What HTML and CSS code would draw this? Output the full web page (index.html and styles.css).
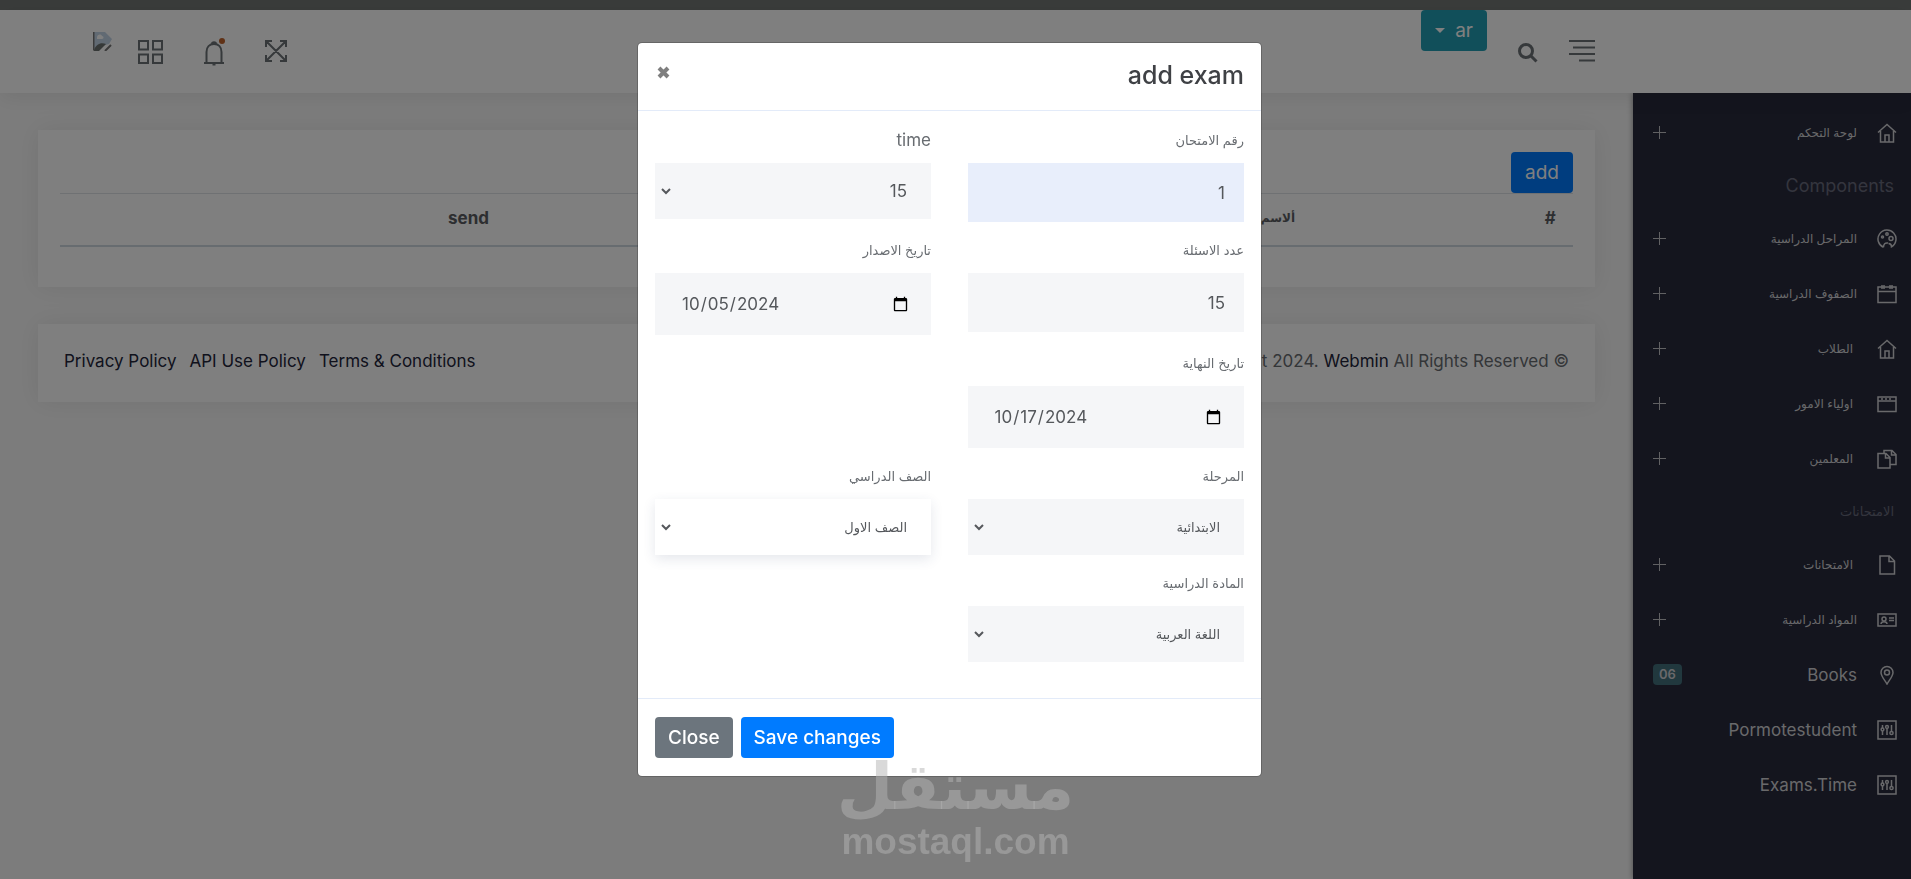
FILE: index.html
```html
<!DOCTYPE html>
<html lang="ar" dir="rtl">
<head>
  <meta charset="UTF-8">
  <meta name="viewport" content="width=device-width, initial-scale=1.0">
  <title>Webmin - Exams</title>
  <link rel="stylesheet" href="styles.css">
</head>
<body>
  <!-- Icons -->
  <svg class="sprite" aria-hidden="true">
    <symbol id="i-home" viewBox="0 0 20 20"><path d="M1 9.500 10 1.500l9 8M3.500 8v11h13V8M8 19v-7h4v7"/></symbol>
    <symbol id="i-palette" viewBox="0 0 20 20"><path d="M6.500 18.300A9 9 0 1 1 14.500 17.800C14.500 16 13.500 14.500 11.500 14.500M6.500 18.300C6.500 15 8 13.500 11 14"/><circle cx="5.500" cy="8" r="1"/><circle cx="10" cy="5" r="1.200"/><circle cx="14" cy="9.500" r="2"/></symbol>
    <symbol id="i-calendar" viewBox="0 0 20 20"><path d="M1 3h18v15.500H1zM1 7.500h18M5 1v4M7 1v4M13 1v4M15 1v4"/></symbol>
    <symbol id="i-window" viewBox="0 0 20 20"><path d="M1 3h18v14.500H1zM1 7h18M4 5h2M8 5h2M12 5h2"/></symbol>
    <symbol id="i-files" viewBox="0 0 20 20"><path d="M1 4.500h8l4 4V19H1zM8.500 4.500V9H13M7 4.500V1.500h8l4 4v10h-6M14.500 1.500V6H19"/></symbol>
    <symbol id="i-file" viewBox="0 0 20 20"><path d="M3 1h9.500L17.500 6v13H3zM12 1v5.500h5.500"/></symbol>
    <symbol id="i-card" viewBox="0 0 20 20"><path d="M1 4h18v12H1zM4 14c0-3 6-3 6 0M12 8h5M12 10.500h5"/><circle cx="7" cy="9" r="2"/></symbol>
    <symbol id="i-pin" viewBox="0 0 20 20"><path d="M10 19C7 14 4 11 4 7.500a6 6 0 0 1 12 0C16 11 13 14 10 19Z"/><circle cx="10" cy="7.500" r="2.500"/></symbol>
    <symbol id="i-panel" viewBox="0 0 20 20"><path d="M1 1h18v18H1zM5.500 5v3M5.500 11v4M10 5v1M10 9v6M14.500 5v6"/><circle cx="5.500" cy="9.500" r="1.400"/><circle cx="10" cy="7" r="1.400"/><circle cx="14.500" cy="13" r="1.600"/></symbol>
  </svg>

  <div class="top-line"></div>

  <header class="header">
    <div class="header-start">
      <a class="icon-link" href="#" aria-label="Menu">
        <svg width="26" height="22" viewBox="0 0 26 22"><path d="M0 1h26M4 7.500h22M0 14h26M10 20.500h16"/></svg>
      </a>
      <a class="icon-link search-link" href="#" aria-label="Search">
        <svg width="20" height="20" viewBox="0 0 20 20"><circle cx="8" cy="8" r="6.500"/><path d="m13 13 5.500 5.500"/></svg>
      </a>
      <button type="button" class="btn btn-info lang-btn">ar <span class="caret"></span></button>
    </div>
    <div class="header-end">
      <a class="icon-link" href="#" aria-label="Full screen">
        <svg width="22" height="22" viewBox="0 0 22 22"><path d="m1 1 20 20M21 1 1 21M1 7V1h6M15 1h6v6M21 15v6h-6M7 21H1v-6"/></svg>
      </a>
      <a class="icon-link bell-link" href="#" aria-label="Notifications">
        <svg width="22" height="26" viewBox="0 0 22 26"><path d="M1 23h20M3.500 23V12c0-5 3-8 7.500-8s7.500 3 7.500 8v11M9 4c0-2.500 4-2.500 4 0M9.500 24.500h3"/></svg>
        <span class="dot"></span>
      </a>
      <a class="icon-link" href="#" aria-label="Apps">
        <svg width="25" height="24" viewBox="0 0 25 24"><path d="M1 1h9v8.500H1zM15 1h9v8.500h-9zM1 14.500h9V23H1zM15 14.500h9V23h-9z"/></svg>
      </a>
      <svg class="avatar" width="19" height="19" viewBox="0 0 19 19"><path fill="#c3d4e6" d="M1 0h11l7 7-3 5-4 1-7 5H1z"/><path fill="#fff" d="M4 5c1-3 4-3 5-1 2 0 2 3 0 3H4z"/><path fill="#6c7370" d="M1 18c2-6 7-8 12-6l-7 7H1z"/><path stroke="#777" fill="none" d="M.5 0v18.500M12 19l6-6"/></svg>
    </div>
  </header>

  <div class="layout">
    <nav class="sidebar">
      <a class="nav-item" href="#"><svg><use href="#i-home"/></svg><span>لوحة التحكم</span><i class="plus"></i></a>
      <h6 class="nav-title">Components</h6>
      <a class="nav-item" href="#"><svg><use href="#i-palette"/></svg><span>المراحل الدراسية</span><i class="plus"></i></a>
      <a class="nav-item" href="#"><svg><use href="#i-calendar"/></svg><span>الصفوف الدراسية</span><i class="plus"></i></a>
      <a class="nav-item" href="#"><svg><use href="#i-home"/></svg><span class="spaced">الطلاب</span><i class="plus"></i></a>
      <a class="nav-item" href="#"><svg><use href="#i-window"/></svg><span class="spaced">اولياء الامور</span><i class="plus"></i></a>
      <a class="nav-item" href="#"><svg><use href="#i-files"/></svg><span class="spaced">المعلمين</span><i class="plus"></i></a>
      <h6 class="nav-title nav-title-ar">الامتحانات</h6>
      <a class="nav-item" href="#"><svg><use href="#i-file"/></svg><span class="spaced">الامتحانات</span><i class="plus"></i></a>
      <a class="nav-item" href="#"><svg><use href="#i-card"/></svg><span>المواد الدراسية</span><i class="plus"></i></a>
      <a class="nav-item nav-en" href="#"><svg><use href="#i-pin"/></svg><span>Books</span><b class="badge">06</b></a>
      <a class="nav-item nav-en" href="#"><svg><use href="#i-panel"/></svg><span>Pormotestudent</span></a>
      <a class="nav-item nav-en" href="#"><svg><use href="#i-panel"/></svg><span>Exams.Time</span></a>
    </nav>

    <main class="content">
      <section class="card">
        <button type="button" class="btn btn-primary">add</button>
        <table class="table">
          <thead>
            <tr>
              <th class="col-id">#</th>
              <th class="col-name">ألاسم</th>
              <th class="col-gap"></th>
              <th class="col-send">send</th>
            </tr>
          </thead>
        </table>
      </section>
      <footer class="card footer" dir="ltr">
        <div class="footer-links">
          <a href="#">Privacy Policy</a>
          <a href="#">API Use Policy</a>
          <a href="#">Terms &amp; Conditions</a>
        </div>
        <p>Copyright 2024. <a href="#">Webmin</a> All Rights Reserved ©</p>
      </footer>
    </main>
  </div>

  <!-- Add exam modal -->
  <div class="backdrop">
    <div class="modal" role="dialog" aria-labelledby="modal-title">
      <div class="modal-header">
        <h5 id="modal-title">add exam</h5>
        <button type="button" class="close" aria-label="Close">
          <svg width="13" height="13" viewBox="0 0 13 13"><path d="m2 2 9 9M11 2l-9 9"/></svg>
        </button>
      </div>
      <form class="modal-body" id="exam-form">
        <div class="field">
          <label for="exam-number">رقم الامتحان</label>
          <input class="autofill" type="text" id="exam-number" value="1">
        </div>
        <div class="field">
          <label class="en" for="exam-time">time</label>
          <select class="en" id="exam-time"><option>15</option></select>
        </div>
        <div class="field">
          <label for="questions">عدد الاسئلة</label>
          <input type="text" id="questions" value="15">
        </div>
        <div class="field">
          <label for="start-date">تاريخ الاصدار</label>
          <input type="date" id="start-date" dir="ltr" value="2024-10-05">
        </div>
        <div class="field full">
          <label for="end-date">تاريخ النهاية</label>
          <input type="date" id="end-date" dir="ltr" value="2024-10-17">
        </div>
        <div class="field">
          <label for="stage">المرحلة</label>
          <select id="stage"><option>الابتدائية</option></select>
        </div>
        <div class="field">
          <label for="grade">الصف الدراسي</label>
          <select class="active" id="grade"><option>الصف الاول</option></select>
        </div>
        <div class="field full">
          <label for="subject">المادة الدراسية</label>
          <select id="subject"><option>اللغة العربية</option></select>
        </div>
      </form>
      <div class="modal-footer">
        <button type="submit" form="exam-form" class="btn btn-primary">Save changes</button>
        <button type="button" class="btn btn-secondary">Close</button>
      </div>
    </div>
  </div>

  <div class="watermark">
    <span class="watermark-ar">مستقل</span>
    <span class="watermark-en">mostaql.com</span>
  </div>
</body>
</html>
```
FILE: styles.css
```css
* {
  box-sizing: border-box;
}

body {
  margin: 0;
  min-height: 100vh;
  display: flex;
  flex-direction: column;
  font-family: Inter, "DejaVu Sans", sans-serif;
  font-size: 17px;
  line-height: 24px;
  color: #686c71;
  background: #f9f9f9;
}

a {
  color: #23253a;
  text-decoration: none;
}

svg {
  fill: none;
  stroke: currentColor;
}

.sprite {
  position: absolute;
  width: 0;
  height: 0;
}

.btn {
  height: 41px;
  padding: 0 14px;
  border: 0;
  border-radius: 4px;
  font-family: inherit;
  font-size: 19px;
  color: #fff;
  cursor: pointer;
}

.btn-primary {
  background: #007bff;
}

.btn-secondary {
  background: #6c757d;
}

.btn-info {
  background: #239fb4;
}

/* header */
.top-line {
  height: 10px;
  background: #747876;
}

.header {
  position: relative;
  z-index: 2;
  display: flex;
  justify-content: space-between;
  height: 83px;
  padding: 0 316px 0 93px;
  background: #fff;
  box-shadow: 0 4px 20px rgba(0, 0, 0, 0.08);
}

.header-start, .header-end {
  display: flex;
  align-items: flex-start;
}

.header-start {
  gap: 31px;
}

.icon-link {
  display: flex;
  margin-top: 30px;
  color: #6c7276;
}

.icon-link svg {
  stroke-width: 2;
}

.search-link {
  margin-top: 33px;
}

.search-link svg {
  stroke-width: 3;
}

.lang-btn {
  display: flex;
  align-items: center;
  gap: 10px;
}

.caret {
  border: 5px solid transparent;
  border-top-color: #fff;
  border-bottom: 0;
}

.header-end {
  gap: 40px;
}

.header-end svg {
  stroke-width: 2;
}

.header-end .avatar {
  margin: 22px -14px 0 0;
  stroke: none;
}

.bell-link {
  position: relative;
}

.dot {
  position: absolute;
  top: -2px;
  right: 0;
  width: 6px;
  height: 6px;
  border-radius: 50%;
  background: #c0622b;
}

/* sidebar */
.layout {
  display: flex;
  flex: 1;
}

.sidebar {
  flex: 0 0 278px;
  padding: 12px 14px 0 20px;
  background: #282a3c;
  box-shadow: 0 0 6px rgba(0, 0, 0, 0.4);
}

.nav-item {
  display: flex;
  align-items: center;
  height: 55px;
  font-size: 12px;
  color: #d2d2d6;
}

.nav-item svg {
  width: 20px;
  height: 20px;
  margin-left: 20px;
  stroke-width: 1.5;
}

.nav-item .spaced {
  padding-right: 4px;
}

.nav-en {
  font-size: 17px;
}

.nav-title {
  margin: 0;
  padding-right: 3px;
  font-size: 18px;
  font-weight: 400;
  line-height: 51px;
  color: #686a7c;
}

.nav-title-ar {
  font-size: 13px;
}

.plus {
  width: 13px;
  height: 13px;
  margin-right: auto;
  background:
    linear-gradient(#c2c2c6, #c2c2c6) center / 13px 1px no-repeat,
    linear-gradient(#c2c2c6, #c2c2c6) center / 1px 13px no-repeat;
}

.badge {
  margin-right: auto;
  padding: 0 6px;
  border-radius: 4px;
  background: #42707c;
  font-size: 13px;
  font-weight: 600;
  line-height: 21px;
}

/* page content */
.content {
  flex: 1;
  display: flex;
  flex-direction: column;
  gap: 37px;
  padding: 37px 38px;
}

.card {
  padding: 22px 22px 40px;
  background: #fff;
  box-shadow: 0 0 24px rgba(0, 0, 0, 0.08);
}

.card .btn {
  display: block;
}

.table {
  width: 100%;
  table-layout: fixed;
  border-collapse: collapse;
}

.table th {
  height: 52px;
  padding: 0 0 2px;
  border-top: 1px solid #dee2e6;
  border-bottom: 2px solid #cfd8e0;
  font-weight: 700;
  color: #5a5d62;
}

.col-id {
  width: 3%;
}

.table .col-name {
  width: 33%;
  font-size: 12px;
}

.col-gap {
  width: 10%;
}

.footer {
  display: flex;
  justify-content: space-between;
  padding: 25px 26px 29px;
}

.footer-links {
  display: flex;
  gap: 13px;
}

.footer p {
  margin: 0;
}

/* modal */
.backdrop {
  position: fixed;
  inset: 0;
  z-index: 10;
  padding: 42px 12px 42px 0;
  overflow: auto;
  background: rgba(0, 0, 0, 0.5);
}

.modal {
  max-width: 625px;
  margin: 0 auto;
  border: 1px solid rgba(0, 0, 0, 0.2);
  border-radius: 5px;
  background: #fff;
  background-clip: padding-box;
}

.modal-header {
  display: flex;
  justify-content: space-between;
  align-items: flex-start;
  padding: 16px 17px 18px;
  border-bottom: 1px solid #e3ebf9;
}

.modal-header h5 {
  margin: 0;
  font-size: 25px;
  font-weight: 500;
  line-height: 33px;
  color: #3f4145;
}

.close {
  padding: 7px 2px;
  border: 0;
  background: none;
  color: #7f7f7f;
}

.close svg {
  display: block;
  stroke-width: 4;
}

.modal-body {
  display: grid;
  grid-template-columns: 1fr 1fr;
  gap: 16px 37px;
  align-items: start;
  padding: 17px 17px 36px;
}

.full {
  grid-column: 1 / -1;
  width: calc(50% - 18px);
}

.field label {
  display: block;
  margin-bottom: 11px;
  font-size: 13px;
}

.field .en {
  font-size: 17px;
}

.field input, .field select {
  display: block;
  width: 100%;
  height: 59px;
  padding: 0 19px;
  border: 0;
  border-radius: 0;
  outline: 0;
  background-color: #f5f6f8;
  font-family: inherit;
  font-size: 17px;
  color: #55585c;
}

.field input[type="date"] {
  height: 62px;
  padding: 0 20px 0 26px;
}

.field select {
  height: 56px;
  padding: 0 20px;
  border-left: 4px solid transparent;
  font-size: 13px;
}

.field .autofill {
  background-color: #e8eefb;
}

.field select.active {
  background-color: #fff;
  box-shadow: 0 4px 12px rgba(40, 60, 100, 0.12);
}

.modal-footer {
  display: flex;
  justify-content: flex-end;
  gap: 8px;
  padding: 18px 17px;
  border-top: 1px solid #e3ebf9;
}

.modal-footer .btn {
  padding: 0 13px;
  font-weight: 500;
}

.watermark {
  position: fixed;
  right: 0;
  bottom: 17px;
  left: 0;
  z-index: 20;
  display: flex;
  flex-direction: column;
  align-items: center;
  font-weight: 700;
  color: rgba(179, 179, 179, 0.5);
  pointer-events: none;
}

.watermark-ar {
  font-family: "DejaVu Sans", sans-serif;
  font-size: 65px;
  line-height: 70px;
}

.watermark-en {
  font-family: "Liberation Sans", Arial, sans-serif;
  font-size: 37px;
  line-height: 40px;
}
```
